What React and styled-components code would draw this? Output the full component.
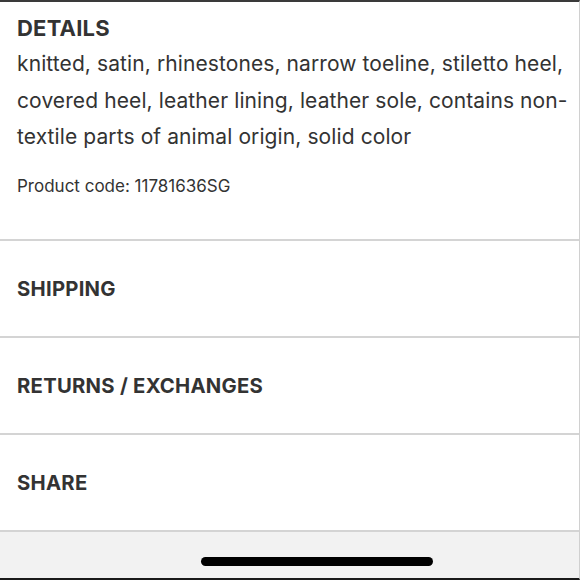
import styled, { createGlobalStyle } from "styled-components";

const Global = createGlobalStyle`
  html, body {
    margin: 0;
    padding: 0;
    background: #ffffff;
  }
  body {
    font-family: Inter, "Open Sans", sans-serif;
    color: #333333;
  }
`

const Screen = styled.div`
  width: 580px;
  height: 580px;
  box-sizing: border-box;
  display: flex;
  flex-direction: column;
  border-top: 2px solid #3a3a3a;
  border-bottom: 2px solid #1a1a1a;
  border-right: 1px solid #d0d0d0;
  background: #ffffff;
  overflow: hidden;
`

const Details = styled.div`
  padding: 13px 17px 0;
  height: 237px;
  box-sizing: border-box;
`

const Heading = styled.h2`
  margin: 0;
  font-size: 22px;
  font-weight: 700;
  line-height: 27px;
  letter-spacing: 0.2px;
  color: #333333;
`

const Body = styled.p`
  margin: 4px 0 0;
  font-size: 21px;
  font-weight: 400;
  line-height: 36.5px;
  letter-spacing: 0.1px;
  color: #333333;
  white-space: nowrap;
`

const Code = styled.p`
  margin: 20px 0 0;
  font-size: 17px;
  line-height: 21px;
  color: #333333;
`

const Row = styled.div`
  height: 97px;
  box-sizing: border-box;
  border-top: 2px solid #d4d4d4;
  display: flex;
  align-items: center;
  padding: 0 17px;
  font-size: 20.3px;
  font-weight: 700;
  letter-spacing: 0.25px;
  color: #333333;
`

const HomeArea = styled.div`
  flex: 1;
  background: #f2f2f2;
  border-top: 2px solid #d4d4d4;
  display: flex;
  justify-content: center;
  align-items: flex-end;
  padding-bottom: 12px;
`

const HomeBar = styled.div`
  width: 232px;
  height: 9px;
  border-radius: 5px;
  background: #000000;
  margin-left: 54px;
`

const sections = ["SHIPPING", "RETURNS / EXCHANGES", "SHARE"]

export default function App() {
  return (
    <>
      <Global />
      <Screen>
        <Details>
          <Heading>DETAILS</Heading>
          <Body>
            knitted, satin, rhinestones, narrow toeline, stiletto heel,<br />
            covered heel, leather lining, leather sole, contains non-<br />
            textile parts of animal origin, solid color
          </Body>
          <Code>Product code: 11781636SG</Code>
        </Details>
        {sections.map((s) => (
          <Row key={s}>{s}</Row>
        ))}
        <HomeArea>
          <HomeBar />
        </HomeArea>
      </Screen>
    </>
  )
}
